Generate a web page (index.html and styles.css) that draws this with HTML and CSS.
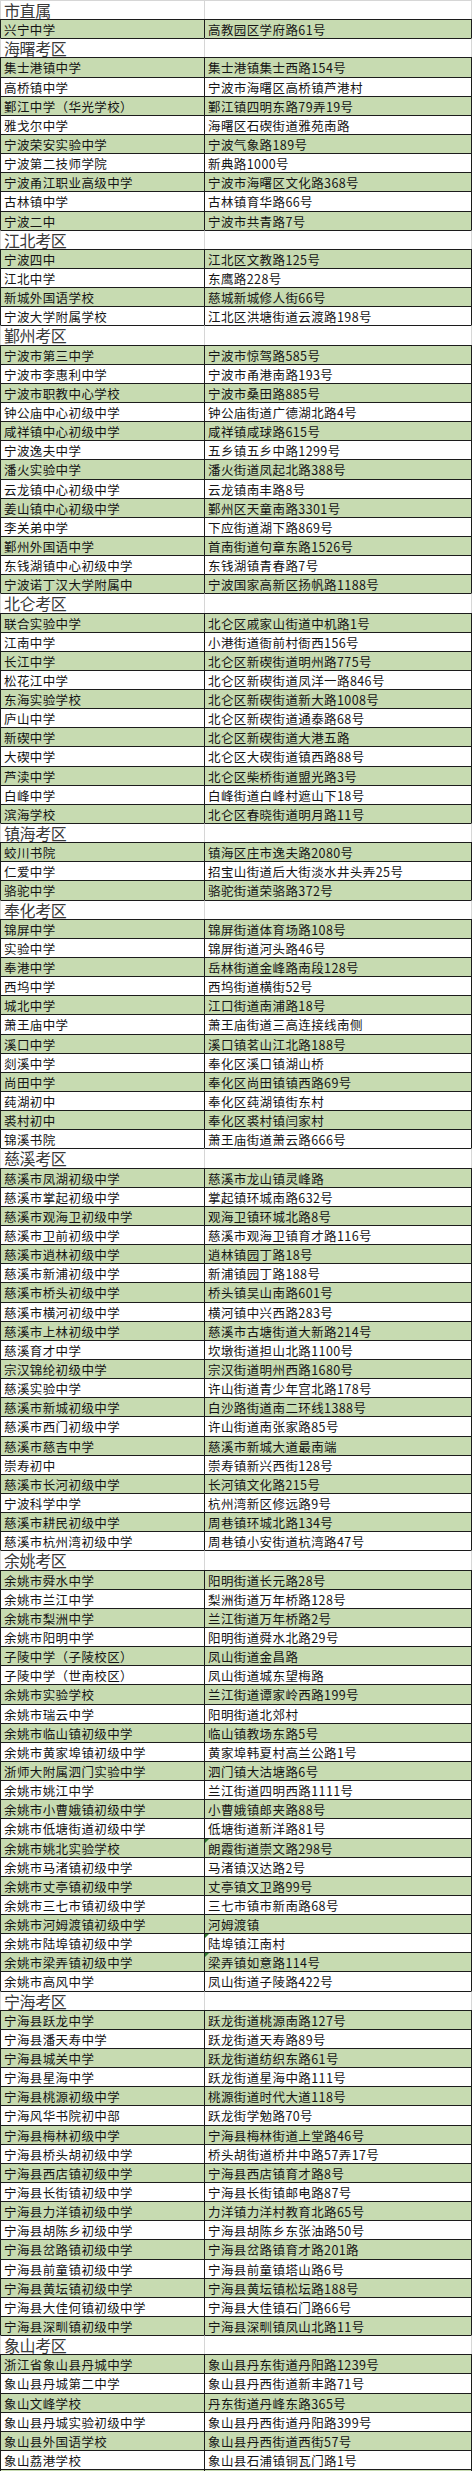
FILE: index.html
```html
<!DOCTYPE html>
<html lang="zh-CN">
<head>
<meta charset="utf-8">
<title>宁波考区学校地址</title>
<link rel="stylesheet" href="styles.css">
</head>
<body>
<div class="sheet">
<div class="row z first"><div class="c1">市直属</div><div class="c2"></div></div>
<div class="row g"><div class="c1">兴宁中学</div><div class="c2">高教园区学府路61号</div></div>
<div class="row z"><div class="c1">海曙考区</div><div class="c2"></div></div>
<div class="row g"><div class="c1">集士港镇中学</div><div class="c2">集士港镇集士西路154号</div></div>
<div class="row w"><div class="c1">高桥镇中学</div><div class="c2">宁波市海曙区高桥镇芦港村</div></div>
<div class="row g"><div class="c1">鄞江中学（华光学校）</div><div class="c2">鄞江镇四明东路79弄19号</div></div>
<div class="row w"><div class="c1">雅戈尔中学</div><div class="c2">海曙区石碶街道雅苑南路</div></div>
<div class="row g"><div class="c1">宁波荣安实验中学</div><div class="c2">宁波气象路189号</div></div>
<div class="row w"><div class="c1">宁波第二技师学院</div><div class="c2">新典路1000号</div></div>
<div class="row g"><div class="c1">宁波甬江职业高级中学</div><div class="c2">宁波市海曙区文化路368号</div></div>
<div class="row w"><div class="c1">古林镇中学</div><div class="c2">古林镇育华路66号</div></div>
<div class="row g"><div class="c1">宁波二中</div><div class="c2">宁波市共青路7号</div></div>
<div class="row z"><div class="c1">江北考区</div><div class="c2"></div></div>
<div class="row g"><div class="c1">宁波四中</div><div class="c2">江北区文教路125号</div></div>
<div class="row w"><div class="c1">江北中学</div><div class="c2">东鹰路228号</div></div>
<div class="row g"><div class="c1">新城外国语学校</div><div class="c2">慈城新城修人街66号</div></div>
<div class="row w"><div class="c1">宁波大学附属学校</div><div class="c2">江北区洪塘街道云渡路198号</div></div>
<div class="row z"><div class="c1">鄞州考区</div><div class="c2"></div></div>
<div class="row g"><div class="c1">宁波市第三中学</div><div class="c2">宁波市惊驾路585号</div></div>
<div class="row w"><div class="c1">宁波市李惠利中学</div><div class="c2">宁波市甬港南路193号</div></div>
<div class="row g"><div class="c1">宁波市职教中心学校</div><div class="c2">宁波市桑田路885号</div></div>
<div class="row w"><div class="c1">钟公庙中心初级中学</div><div class="c2">钟公庙街道广德湖北路4号</div></div>
<div class="row g"><div class="c1">咸祥镇中心初级中学</div><div class="c2">咸祥镇咸球路615号</div></div>
<div class="row w"><div class="c1">宁波逸夫中学</div><div class="c2">五乡镇五乡中路1299号</div></div>
<div class="row g"><div class="c1">潘火实验中学</div><div class="c2">潘火街道凤起北路388号</div></div>
<div class="row w"><div class="c1">云龙镇中心初级中学</div><div class="c2">云龙镇南丰路8号</div></div>
<div class="row g"><div class="c1">姜山镇中心初级中学</div><div class="c2">鄞州区天童南路3301号</div></div>
<div class="row w"><div class="c1">李关弟中学</div><div class="c2">下应街道湖下路869号</div></div>
<div class="row g"><div class="c1">鄞州外国语中学</div><div class="c2">首南街道句章东路1526号</div></div>
<div class="row w"><div class="c1">东钱湖镇中心初级中学</div><div class="c2">东钱湖镇青春路7号</div></div>
<div class="row g"><div class="c1">宁波诺丁汉大学附属中</div><div class="c2">宁波国家高新区扬帆路1188号</div></div>
<div class="row z"><div class="c1">北仑考区</div><div class="c2"></div></div>
<div class="row g"><div class="c1">联合实验中学</div><div class="c2">北仑区戚家山街道中机路1号</div></div>
<div class="row w"><div class="c1">江南中学</div><div class="c2">小港街道衙前村衙西156号</div></div>
<div class="row g"><div class="c1">长江中学</div><div class="c2">北仑区新碶街道明州路775号</div></div>
<div class="row w"><div class="c1">松花江中学</div><div class="c2">北仑区新碶街道凤洋一路846号</div></div>
<div class="row g"><div class="c1">东海实验学校</div><div class="c2">北仑区新碶街道新大路1008号</div></div>
<div class="row w"><div class="c1">庐山中学</div><div class="c2">北仑区新碶街道通泰路68号</div></div>
<div class="row g"><div class="c1">新碶中学</div><div class="c2">北仑区新碶街道大港五路</div></div>
<div class="row w"><div class="c1">大碶中学</div><div class="c2">北仑区大碶街道镇西路88号</div></div>
<div class="row g"><div class="c1">芦渎中学</div><div class="c2">北仑区柴桥街道盟光路3号</div></div>
<div class="row w"><div class="c1">白峰中学</div><div class="c2">白峰街道白峰村遮山下18号</div></div>
<div class="row g"><div class="c1">滨海学校</div><div class="c2">北仑区春晓街道明月路11号</div></div>
<div class="row z"><div class="c1">镇海考区</div><div class="c2"></div></div>
<div class="row g"><div class="c1">蛟川书院</div><div class="c2">镇海区庄市逸夫路2080号</div></div>
<div class="row w"><div class="c1">仁爱中学</div><div class="c2">招宝山街道后大街淡水井头弄25号</div></div>
<div class="row g"><div class="c1">骆驼中学</div><div class="c2">骆驼街道荣骆路372号</div></div>
<div class="row z"><div class="c1">奉化考区</div><div class="c2"></div></div>
<div class="row g"><div class="c1">锦屏中学</div><div class="c2">锦屏街道体育场路108号</div></div>
<div class="row w"><div class="c1">实验中学</div><div class="c2">锦屏街道河头路46号</div></div>
<div class="row g"><div class="c1">奉港中学</div><div class="c2">岳林街道金峰路南段128号</div></div>
<div class="row w"><div class="c1">西坞中学</div><div class="c2">西坞街道横街52号</div></div>
<div class="row g"><div class="c1">城北中学</div><div class="c2">江口街道南浦路18号</div></div>
<div class="row w"><div class="c1">萧王庙中学</div><div class="c2">萧王庙街道三高连接线南侧</div></div>
<div class="row g"><div class="c1">溪口中学</div><div class="c2">溪口镇茗山江北路188号</div></div>
<div class="row w"><div class="c1">剡溪中学</div><div class="c2">奉化区溪口镇湖山桥</div></div>
<div class="row g"><div class="c1">尚田中学</div><div class="c2">奉化区尚田镇镇西路69号</div></div>
<div class="row w"><div class="c1">莼湖初中</div><div class="c2">奉化区莼湖镇街东村</div></div>
<div class="row g"><div class="c1">裘村初中</div><div class="c2">奉化区裘村镇闫家村</div></div>
<div class="row w"><div class="c1">锦溪书院</div><div class="c2">萧王庙街道萧云路666号</div></div>
<div class="row z"><div class="c1">慈溪考区</div><div class="c2"></div></div>
<div class="row g"><div class="c1">慈溪市凤湖初级中学</div><div class="c2">慈溪市龙山镇灵峰路</div></div>
<div class="row w"><div class="c1">慈溪市掌起初级中学</div><div class="c2">掌起镇环城南路632号</div></div>
<div class="row g"><div class="c1">慈溪市观海卫初级中学</div><div class="c2">观海卫镇环城北路8号</div></div>
<div class="row w"><div class="c1">慈溪市卫前初级中学</div><div class="c2">慈溪市观海卫镇育才路116号</div></div>
<div class="row g"><div class="c1">慈溪市逍林初级中学</div><div class="c2">逍林镇园丁路18号</div></div>
<div class="row w"><div class="c1">慈溪市新浦初级中学</div><div class="c2">新浦镇园丁路188号</div></div>
<div class="row g"><div class="c1">慈溪市桥头初级中学</div><div class="c2">桥头镇吴山南路601号</div></div>
<div class="row w"><div class="c1">慈溪市横河初级中学</div><div class="c2">横河镇中兴西路283号</div></div>
<div class="row g"><div class="c1">慈溪市上林初级中学</div><div class="c2">慈溪市古塘街道大新路214号</div></div>
<div class="row w"><div class="c1">慈溪育才中学</div><div class="c2">坎墩街道担山北路1100号</div></div>
<div class="row g"><div class="c1">宗汉锦纶初级中学</div><div class="c2">宗汉街道明州西路1680号</div></div>
<div class="row w"><div class="c1">慈溪实验中学</div><div class="c2">许山街道青少年宫北路178号</div></div>
<div class="row g"><div class="c1">慈溪市新城初级中学</div><div class="c2">白沙路街道南二环线1388号</div></div>
<div class="row w"><div class="c1">慈溪市西门初级中学</div><div class="c2">许山街道南张家路85号</div></div>
<div class="row g"><div class="c1">慈溪市慈吉中学</div><div class="c2">慈溪市新城大道最南端</div></div>
<div class="row w"><div class="c1">崇寿初中</div><div class="c2">崇寿镇新兴西街128号</div></div>
<div class="row g"><div class="c1">慈溪市长河初级中学</div><div class="c2">长河镇文化路215号</div></div>
<div class="row w"><div class="c1">宁波科学中学</div><div class="c2">杭州湾新区修远路9号</div></div>
<div class="row g"><div class="c1">慈溪市耕民初级中学</div><div class="c2">周巷镇环城北路134号</div></div>
<div class="row w"><div class="c1">慈溪市杭州湾初级中学</div><div class="c2">周巷镇小安街道杭湾路47号</div></div>
<div class="row z"><div class="c1">余姚考区</div><div class="c2"></div></div>
<div class="row g"><div class="c1">余姚市舜水中学</div><div class="c2">阳明街道长元路28号</div></div>
<div class="row w"><div class="c1">余姚市兰江中学</div><div class="c2">梨洲街道万年桥路128号</div></div>
<div class="row g"><div class="c1">余姚市梨洲中学</div><div class="c2">兰江街道万年桥路2号</div></div>
<div class="row w"><div class="c1">余姚市阳明中学</div><div class="c2">阳明街道舜水北路29号</div></div>
<div class="row g"><div class="c1">子陵中学（子陵校区）</div><div class="c2">凤山街道金昌路</div></div>
<div class="row w"><div class="c1">子陵中学（世南校区）</div><div class="c2">凤山街道城东望梅路</div></div>
<div class="row g"><div class="c1">余姚市实验学校</div><div class="c2">兰江街道谭家岭西路199号</div></div>
<div class="row w"><div class="c1">余姚市瑞云中学</div><div class="c2">阳明街道北郊村</div></div>
<div class="row g"><div class="c1">余姚市临山镇初级中学</div><div class="c2">临山镇教场东路5号</div></div>
<div class="row w"><div class="c1">余姚市黄家埠镇初级中学</div><div class="c2">黄家埠韩夏村高兰公路1号</div></div>
<div class="row g"><div class="c1">浙师大附属泗门实验中学</div><div class="c2">泗门镇大沽塘路6号</div></div>
<div class="row w"><div class="c1">余姚市姚江中学</div><div class="c2">兰江街道四明西路1111号</div></div>
<div class="row g"><div class="c1">余姚市小曹娥镇初级中学</div><div class="c2">小曹娥镇郎夹路88号</div></div>
<div class="row w"><div class="c1">余姚市低塘街道初级中学</div><div class="c2">低塘街道新洋路81号</div></div>
<div class="row g"><div class="c1">余姚市姚北实验学校</div><div class="c2 mark">朗霞街道崇文路298号</div></div>
<div class="row w"><div class="c1">余姚市马渚镇初级中学</div><div class="c2">马渚镇汉达路2号</div></div>
<div class="row g"><div class="c1">余姚市丈亭镇初级中学</div><div class="c2">丈亭镇文卫路99号</div></div>
<div class="row w"><div class="c1">余姚市三七市镇初级中学</div><div class="c2">三七市镇市新南路68号</div></div>
<div class="row g"><div class="c1">余姚市河姆渡镇初级中学</div><div class="c2">河姆渡镇</div></div>
<div class="row w"><div class="c1">余姚市陆埠镇初级中学</div><div class="c2 mark">陆埠镇江南村</div></div>
<div class="row g"><div class="c1">余姚市梁弄镇初级中学</div><div class="c2 mark">梁弄镇如意路114号</div></div>
<div class="row w"><div class="c1">余姚市高风中学</div><div class="c2">凤山街道子陵路422号</div></div>
<div class="row z"><div class="c1">宁海考区</div><div class="c2"></div></div>
<div class="row g"><div class="c1">宁海县跃龙中学</div><div class="c2">跃龙街道桃源南路127号</div></div>
<div class="row w"><div class="c1">宁海县潘天寿中学</div><div class="c2">跃龙街道天寿路89号</div></div>
<div class="row g"><div class="c1">宁海县城关中学</div><div class="c2">跃龙街道纺织东路61号</div></div>
<div class="row w"><div class="c1">宁海县星海中学</div><div class="c2">跃龙街道星海中路111号</div></div>
<div class="row g"><div class="c1">宁海县桃源初级中学</div><div class="c2">桃源街道时代大道118号</div></div>
<div class="row w"><div class="c1">宁海风华书院初中部</div><div class="c2">跃龙街学勉路70号</div></div>
<div class="row g"><div class="c1">宁海县梅林初级中学</div><div class="c2">宁海县梅林街道上堂路46号</div></div>
<div class="row w"><div class="c1">宁海县桥头胡初级中学</div><div class="c2">桥头胡街道桥井中路57弄17号</div></div>
<div class="row g"><div class="c1">宁海县西店镇初级中学</div><div class="c2">宁海县西店镇育才路8号</div></div>
<div class="row w"><div class="c1">宁海县长街镇初级中学</div><div class="c2">宁海县长街镇邮电路87号</div></div>
<div class="row g"><div class="c1">宁海县力洋镇初级中学</div><div class="c2">力洋镇力洋村教育北路65号</div></div>
<div class="row w"><div class="c1">宁海县胡陈乡初级中学</div><div class="c2">宁海县胡陈乡东张油路50号</div></div>
<div class="row g"><div class="c1">宁海县岔路镇初级中学</div><div class="c2">宁海县岔路镇育才路201路</div></div>
<div class="row w"><div class="c1">宁海县前童镇初级中学</div><div class="c2">宁海县前童镇塔山路6号</div></div>
<div class="row g"><div class="c1">宁海县黄坛镇初级中学</div><div class="c2">宁海县黄坛镇松坛路188号</div></div>
<div class="row w"><div class="c1">宁海县大佳何镇初级中学</div><div class="c2">宁海县大佳镇石门路66号</div></div>
<div class="row g"><div class="c1">宁海县深甽镇初级中学</div><div class="c2">宁海县深甽镇凤山北路11号</div></div>
<div class="row z"><div class="c1">象山考区</div><div class="c2"></div></div>
<div class="row g"><div class="c1">浙江省象山县丹城中学</div><div class="c2">象山县丹东街道丹阳路1239号</div></div>
<div class="row w"><div class="c1">象山县丹城第二中学</div><div class="c2">象山县丹西街道新丰路71号</div></div>
<div class="row g"><div class="c1">象山文峰学校</div><div class="c2">丹东街道丹峰东路365号</div></div>
<div class="row w"><div class="c1">象山县丹城实验初级中学</div><div class="c2">象山县丹西街道丹阳路399号</div></div>
<div class="row g"><div class="c1">象山县外国语学校</div><div class="c2">象山县丹西街道西街57号</div></div>
<div class="row w"><div class="c1">象山荔港学校</div><div class="c2">象山县石浦镇铜瓦门路1号</div></div>
<div class="row g last"><div class="c1">象山县石浦中学</div><div class="c2">象山县石浦镇金山路250号</div></div>
</div>
</body>
</html>
```
FILE: styles.css
```css
html, body {
  margin: 0;
  padding: 0;
  background: #ffffff;
}

.sheet {
  width: 472px;
  font-family: "Noto Sans CJK SC", "Noto Sans", sans-serif;
  color: #141414;
}

.row {
  display: grid;
  grid-template-columns: 204px 268px;
  height: 19.155px;
}

.c1, .c2 {
  box-sizing: border-box;
  border-top: 1px solid #1c1c1c;
  border-left: 1px solid #1c1c1c;
  padding: 1px 0 0 3px;
  font-size: 12.5px;
  letter-spacing: 0.4px;
  line-height: 17px;
  white-space: nowrap;
}

.c2 {
  border-right: 1px solid #1c1c1c;
  position: relative;
}

.g .c1, .g .c2 {
  background: #c7dbb1;
}

.w .c1, .w .c2 {
  background: #ffffff;
}

.z .c1, .z .c2 {
  background: #ffffff;
  border-left-color: #d6d6d6;
}

.z .c2 {
  border-right-color: #d6d6d6;
}

.z .c1 {
  font-size: 16px;
  letter-spacing: -0.4px;
  color: #3a3a3a;
  line-height: 19px;
  padding-top: 0;
}

.first .c1, .first .c2 {
  border-top-color: #d6d6d6;
}

.last .c1, .last .c2 {
  border-bottom: 1px solid #1c1c1c;
}

.mark::before {
  content: "";
  position: absolute;
  left: 0;
  top: 0;
  border-top: 4px solid #2f7a2f;
  border-right: 4px solid transparent;
}
```
